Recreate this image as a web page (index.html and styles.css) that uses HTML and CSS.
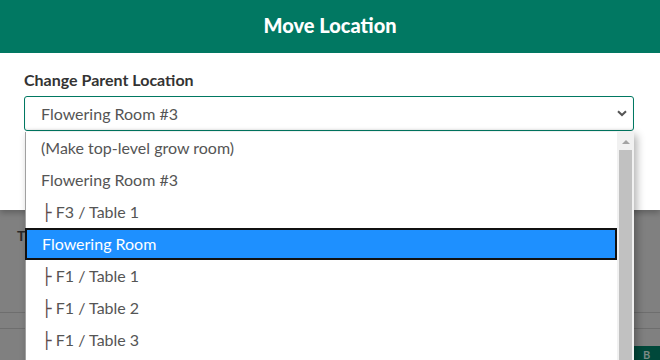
FILE: index.html
```html
<!DOCTYPE html>
<html>
<head>
<meta charset="utf-8">
<link rel="stylesheet" href="styles.css">
</head>
<body>
<div class="page">
  <div class="backdrop">
    <div class="bd-heading">T</div>
    <div class="bd-lines">
      <div class="bd-line"></div>
      <div class="bd-line"></div>
    </div>
    <div class="bd-button">B</div>
  </div>
  <div class="modal">
    <div class="modal-header">Move Location</div>
    <div class="modal-body">
      <label class="field-label">Change Parent Location</label>
      <div class="select-wrap">
        <div class="select">
          <span class="select-value">Flowering Room #3</span>
          <svg class="chevron" width="10" height="7" viewBox="0 0 10 7"><path d="M1 1.2 L5 5 L9 1.2" fill="none" stroke="#555" stroke-width="2"/></svg>
        </div>
        <div class="listbox">
          <div class="options">
            <div class="option">(Make top-level grow room)</div>
            <div class="option">Flowering Room #3</div>
            <div class="option"><span class="tree">├</span> F3 / Table 1</div>
            <div class="option selected">Flowering Room</div>
            <div class="option"><span class="tree">├</span> F1 / Table 1</div>
            <div class="option"><span class="tree">├</span> F1 / Table 2</div>
            <div class="option"><span class="tree">├</span> F1 / Table 3</div>
          </div>
          <div class="scrollbar">
            <div class="scroll-up"></div>
            <div class="scroll-thumb"></div>
          </div>
        </div>
      </div>
    </div>
  </div>
</div>
</body>
</html>
```
FILE: styles.css
```css
html, body {
  margin: 0;
  padding: 0;
}
body {
  width: 660px;
  height: 360px;
  overflow: hidden;
  font-family: Lato, "Noto Sans", sans-serif;
}
.page {
  position: relative;
  width: 660px;
  height: 360px;
  background: #808080;
}
.backdrop {
  position: absolute;
  inset: 210px 0 0 0;
  display: flex;
  flex-direction: column;
}
.bd-heading {
  padding: 17px 0 0 17px;
  font-weight: 700;
  font-size: 14px;
  color: #2a2a2a;
  height: 70px;
}
.bd-lines {
  margin-top: 15px;
}
.bd-line {
  height: 15px;
  border-top: 1px solid #6e6e6e;
}
.bd-button {
  position: absolute;
  right: 0;
  top: 136px;
  width: 26px;
  height: 14px;
  background: #00483a;
  color: #7a8a86;
  font-weight: 700;
  font-size: 11px;
  line-height: 11px;
  padding: 3px 0 0 9px;
  box-sizing: border-box;
  overflow: hidden;
}
.modal {
  position: relative;
  background: #fff;
  height: 210px;
  box-shadow: 0 3px 6px rgba(0,0,0,0.25);
}
.modal-header {
  height: 53px;
  background: #017862;
  color: #fff;
  font-weight: 900;
  font-size: 20px;
  display: flex;
  align-items: center;
  justify-content: center;
  padding-bottom: 3px;
  box-sizing: border-box;
}
.modal-body {
  padding: 18px 26px 0 24px;
}
.field-label {
  display: block;
  font-weight: 700;
  font-size: 16px;
  line-height: 18px;
  color: #333;
  margin-bottom: 7px;
}
.select-wrap {
  position: relative;
}
.select {
  height: 33px;
  border: 1px solid #017862;
  border-radius: 3px;
  display: flex;
  align-items: center;
  justify-content: space-between;
  padding: 0 6px 0 16px;
  box-shadow: inset 0 -1px 2px rgba(0,0,0,0.08);
}
.select-value {
  font-size: 16px;
  color: #555;
}
.listbox {
  position: absolute;
  left: 1px;
  right: 0;
  top: 36px;
  height: 240px;
  background: #fff;
  border-left: 1px solid #a0a0a0;
  display: flex;
  box-shadow: 3px 3px 8px rgba(0,0,0,0.3);
}
.options {
  flex: 1;
}
.option {
  height: 32px;
  line-height: 32px;
  padding-left: 15px;
  font-size: 16px;
  color: #555;
  box-sizing: border-box;
}
.option.selected {
  background: #1e90ff;
  color: #fff;
  border: 2px solid #111;
  line-height: 28px;
  padding-left: 15px;
  margin-left: -1px;
}
.tree {
  font-family: "DejaVu Sans", sans-serif;
  color: #5e4a4a;
  padding-left: 1px;
}
.scrollbar {
  width: 17px;
  background: #f1f1f1;
  display: flex;
  flex-direction: column;
  align-items: center;
}
.scroll-up {
  margin-top: 8px;
  width: 0;
  height: 0;
  border-left: 4px solid transparent;
  border-right: 4px solid transparent;
  border-bottom: 4px solid #a3a3a3;
}
.scroll-thumb {
  margin-top: 6px;
  width: 13px;
  flex: 1;
  background: #c1c1c1;
}
```
